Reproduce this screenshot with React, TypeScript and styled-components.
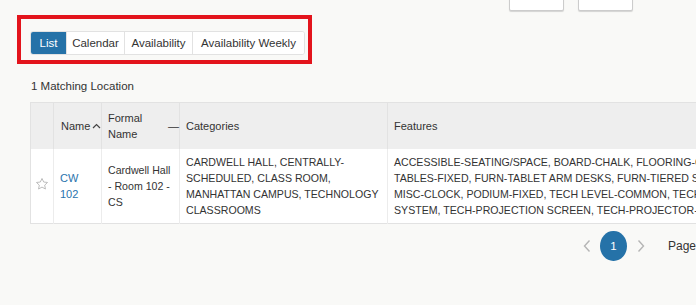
import React from 'react';
import styled, { createGlobalStyle } from 'styled-components';

const GlobalStyle = createGlobalStyle`
  html, body {
    margin: 0;
    padding: 0;
    background: #f9f9f7;
    font-family: "Liberation Sans", Arial, sans-serif;
    font-size: 11.5px;
    color: #333;
    overflow: hidden;
  }
`;

const Page = styled.div`
  width: 696px;
  height: 305px;
  overflow: hidden;
  position: relative;
`;

const TopBar = styled.div`
  height: 11px;
  display: flex;
  align-items: flex-end;
  justify-content: flex-end;
  gap: 14px;
  padding-right: 63px;
`;

const TopButton = styled.button`
  width: 55px;
  height: 30px;
  flex-shrink: 0;
  background: #fff;
  border: 1px solid #ccc;
  border-radius: 0 0 2px 2px;
  box-shadow: 0 1px 1px rgba(0, 0, 0, 0.15);
  padding: 0;
`;

const Highlight = styled.div`
  margin: 4px 0 0 17px;
  width: 295px;
  height: 49px;
  box-sizing: border-box;
  border: 4px solid #e3141c;
  padding: 12px 0 0 9px;
`;

const TabGroup = styled.div`
  display: inline-flex;
  height: 24px;
  border: 1px solid #e2e2e2;
  border-radius: 3px;
  background: #fff;
  box-sizing: border-box;
  overflow: hidden;
`;

const Tab = styled.div<{ $active?: boolean; $w: number }>`
  display: flex;
  align-items: center;
  justify-content: center;
  width: ${(p) => p.$w}px;
  box-sizing: border-box;
  white-space: nowrap;
  border-left: 1px solid ${(p) => (p.$active ? '#2572a8' : '#e2e2e2')};
  background: ${(p) => (p.$active ? '#2572a8' : '#fff')};
  color: ${(p) => (p.$active ? '#fff' : '#333')};
  font-size: 11.5px;
  &:first-child {
    border-left: none;
  }
`;

const Count = styled.div`
  margin: 15px 0 0 31px;
  line-height: 14px;
`;

const TableWrap = styled.div`
  margin: 9px 0 0 30px;
`;

const Table = styled.table`
  border-collapse: collapse;
  width: 900px;
  table-layout: fixed;
  border: 1px solid #e2e2e2;
  line-height: 16px;
  font-size: 10.6px;
`;

const Th = styled.th<{ $w: number; $tight?: boolean }>`
  width: ${(p) => p.$w}px;
  height: 46px;
  box-sizing: border-box;
  background: #eee;
  font-weight: normal;
  font-size: 11px;
  text-align: left;
  padding: ${(p) => (p.$tight ? '6px 2px 6px 7px' : '6px')};
  border-left: 1px solid #e2e2e2;
  vertical-align: middle;
  &:first-child {
    border-left: none;
  }
`;

const HeadInner = styled.div<{ $spread?: boolean }>`
  display: flex;
  align-items: center;
  justify-content: ${(p) => (p.$spread ? 'space-between' : 'flex-start')};
  white-space: nowrap;
`;

const Td = styled.td`
  background: #fff;
  padding: 5px 6px;
  border-left: 1px solid #ececec;
  vertical-align: middle;
  white-space: nowrap;
  overflow: hidden;
`;

const StarCell = styled(Td)`
  text-align: center;
  padding: 0;
  border-left: none;
`;

const Link = styled.a`
  color: #2a73ad;
  text-decoration: none;
  font-size: 11px;
`;

const Dash = styled.span`
  color: #333;
  margin-right: -6px;
`;

const CaretIcon = styled.svg`
  flex-shrink: 0;
  margin-left: 2px;
  margin-top: 1px;
`;

const Pager = styled.div`
  display: flex;
  align-items: center;
  margin: 7px 0 0 581px;
`;

const Arrow = styled.span`
  display: flex;
  width: 14px;
  justify-content: center;
`;

const PageDot = styled.div`
  width: 30px;
  height: 30px;
  border-radius: 50%;
  background: #2572a8;
  color: #fff;
  display: flex;
  align-items: center;
  justify-content: center;
  font-size: 11.5px;
  margin: 0 8px 0 7px;
`;

const PageLabel = styled.span`
  margin-left: 21px;
  font-size: 12px;
`;

const Chevron = ({ dir }: { dir: 'left' | 'right' }) => (
  <svg width="8" height="14" viewBox="0 0 8 14">
    <path
      d={dir === 'left' ? 'M6.5 1.5 1.5 7l5 5.5' : 'M1.5 1.5 6.5 7l-5 5.5'}
      fill="none"
      stroke="#b5b5b5"
      strokeWidth="1.4"
    />
  </svg>
);

const Star = () => (
  <svg width="14" height="14" viewBox="0 0 24 24">
    <path
      d="M12 2.5l2.9 6.1 6.6.8-4.9 4.6 1.3 6.6L12 17.3l-5.9 3.3 1.3-6.6-4.9-4.6 6.6-.8z"
      fill="none"
      stroke="#b8b8b8"
      strokeWidth="1.6"
      strokeLinejoin="round"
    />
  </svg>
);

const Caret = () => (
  <CaretIcon width="9" height="6" viewBox="0 0 9 6">
    <path d="M1 5 4.5 1.5 8 5" fill="none" stroke="#444" strokeWidth="1.2" />
  </CaretIcon>
);

export default function App(): React.ReactElement {
  return (
    <Page>
      <GlobalStyle />
      <TopBar>
        <TopButton />
        <TopButton />
      </TopBar>
      <Highlight>
        <TabGroup>
          <Tab $active $w={35}>
            List
          </Tab>
          <Tab $w={58}>Calendar</Tab>
          <Tab $w={68}>Availability</Tab>
          <Tab $w={112}>Availability Weekly</Tab>
        </TabGroup>
      </Highlight>
      <Count>1 Matching Location</Count>
      <TableWrap>
        <Table>
          <thead>
            <tr>
              <Th $w={23} />
              <Th $w={48} $tight>
                <HeadInner>
                  Name
                  <Caret />
                </HeadInner>
              </Th>
              <Th $w={78}>
                <HeadInner $spread>
                  <span>
                    Formal
                    <br />
                    Name
                  </span>
                  <Dash>—</Dash>
                </HeadInner>
              </Th>
              <Th $w={208}>Categories</Th>
              <Th $w={543}>Features</Th>
            </tr>
          </thead>
          <tbody>
            <tr>
              <StarCell>
                <Star />
              </StarCell>
              <Td>
                <Link href="#">
                  CW
                  <br />
                  102
                </Link>
              </Td>
              <Td>
                Cardwell Hall
                <br />- Room 102 -
                <br />
                CS
              </Td>
              <Td>
                CARDWELL HALL, CENTRALLY-
                <br />
                SCHEDULED, CLASS ROOM,
                <br />
                MANHATTAN CAMPUS, TECHNOLOGY
                <br />
                CLASSROOMS
              </Td>
              <Td>
                ACCESSIBLE-SEATING/SPACE, BOARD-CHALK, FLOORING-CARPET, FURN-
                <br />
                TABLES-FIXED, FURN-TABLET ARM DESKS, FURN-TIERED SEATING,
                <br />
                MISC-CLOCK, PODIUM-FIXED, TECH LEVEL-COMMON, TECH-SOUND
                <br />
                SYSTEM, TECH-PROJECTION SCREEN, TECH-PROJECTOR-DIGITAL
              </Td>
            </tr>
          </tbody>
        </Table>
      </TableWrap>
      <Pager>
        <Arrow>
          <Chevron dir="left" />
        </Arrow>
        <PageDot>1</PageDot>
        <Arrow>
          <Chevron dir="right" />
        </Arrow>
        <PageLabel>Page</PageLabel>
      </Pager>
    </Page>
  );
}
